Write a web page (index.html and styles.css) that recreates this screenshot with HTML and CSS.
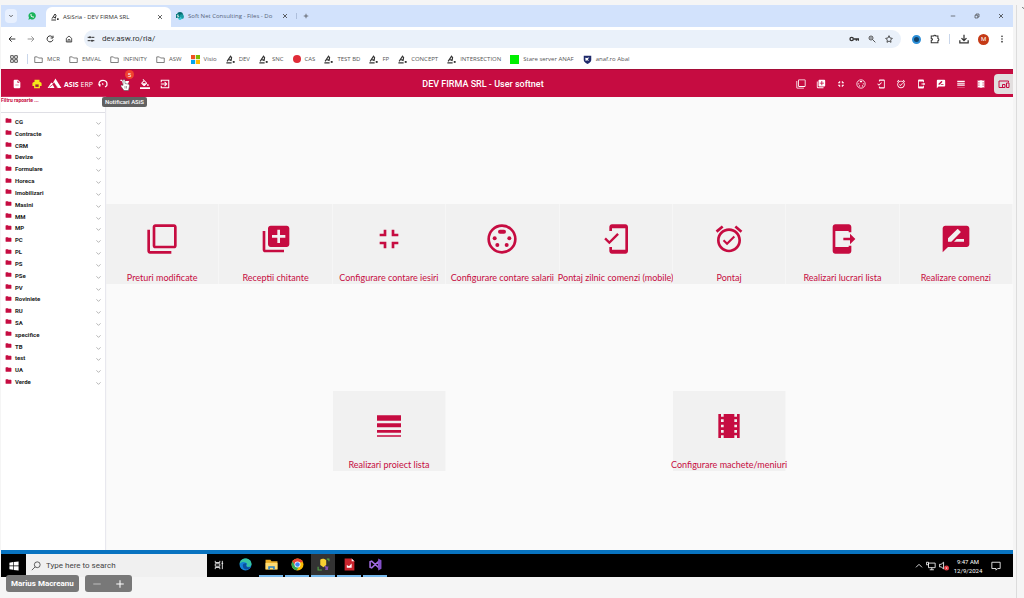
FILE: index.html
```html
<!DOCTYPE html>
<html lang="ro">
<head>
<meta charset="utf-8">
<title>ASiSria - DEV FIRMA SRL</title>
<link rel="stylesheet" href="styles.css">
</head>
<body>
<svg class="defs" aria-hidden="true">
<symbol id="copies" viewBox="0 0 24 24"><path d="M3 5H1v16c0 1.100.9 2 2 2h16v-2H3V5zm18-4H7c-1.100 0-2 .9-2 2v14c0 1.100.9 2 2 2h14c1.100 0 2-.9 2-2V3c0-1.100-.9-2-2-2zm0 16H7V3h14v14z"/></symbol>
<symbol id="add" viewBox="0 0 24 24"><path d="M4 6H2v14c0 1.100.9 2 2 2h14v-2H4V6zm16-4H8c-1.100 0-2 .9-2 2v12c0 1.100.9 2 2 2h12c1.100 0 2-.9 2-2V4c0-1.100-.9-2-2-2zm-1 9h-4v4h-2v-4H9V9h4V5h2v4h4v2z"/></symbol>
<symbol id="shrink" viewBox="0 0 24 24"><path d="M5 16h3v3h2v-5H5v2zm3-8H5v2h5V5H8v3zm6 11h2v-3h3v-2h-5v5zm2-11V5h-2v5h5V8h-3z"/></symbol>
<symbol id="socket" viewBox="0 0 24 24"><circle cx="12" cy="12" r="10" fill="none" stroke="currentColor" stroke-width="2"/><rect x="9" y="5" width="6" height="3" rx="1.500"/><circle cx="6.500" cy="11.500" r="1.500"/><circle cx="17.500" cy="11.500" r="1.500"/><circle cx="8.500" cy="16.500" r="1.500"/><circle cx="15.500" cy="16.500" r="1.500"/></symbol>
<symbol id="mobile" viewBox="0 0 24 24"><path d="M19 1H9c-1.100 0-2 .9-2 2v3h2V4h10v16H9v-2H7v3c0 1.100.9 2 2 2h10c1.100 0 2-.9 2-2V3c0-1.100-.9-2-2-2zM7 13.470l-2.550-2.550-1.270 1.270L7 16l7.190-7.190-1.270-1.270z"/></symbol>
<symbol id="alarm" viewBox="0 0 24 24"><path d="M22 5.720l-4.600-3.860-1.290 1.530 4.600 3.860L22 5.720zM7.880 3.390L6.600 1.860 2 5.710l1.290 1.530 4.590-3.850zM12 4c-4.970 0-9 4.030-9 9s4.020 9 9 9c4.970 0 9-4.030 9-9s-4.030-9-9-9zm0 16c-3.870 0-7-3.130-7-7s3.130-7 7-7 7 3.130 7 7-3.130 7-7 7zm-1.460-5.470L8.410 12.400l-1.060 1.060 3.180 3.180 6-6-1.060-1.060-4.930 4.950z"/></symbol>
<symbol id="send" viewBox="0 0 24 24"><path d="M17 17h2v4c0 1.100-.9 2-2 2H7c-1.100 0-2-.9-2-2V3c0-1.100.9-2 2-2h10c1.100 0 2 .9 2 2v4h-2V6H7v12h10v-1zM22 12l-4-4v3h-5v2h5v3l4-4z"/></symbol>
<symbol id="review" viewBox="0 0 24 24"><path d="M20 2H4c-1.100 0-2 .9-2 2v18l4-4h14c1.100 0 2-.9 2-2V4c0-1.100-.9-2-2-2zM6 14v-2.470l6.880-6.880c.2-.2.510-.2.710 0l1.770 1.770c.2.2.2.510 0 .710L8.470 14H6zm12 0h-7.500l2-2H18v2z"/></symbol>
<symbol id="lines" viewBox="0 0 24 24"><path d="M3 17h18v-2H3v2zm0 3h18v-1H3v1zm0-7h18v-3H3v3zm0-9v4h18V4H3z"/></symbol>
<symbol id="film" viewBox="0 0 24 24"><path d="M18 3v2h-2V3H8v2H6V3H4v18h2v-2h2v2h8v-2h2v2h2V3h-2zM8 17H6v-2h2v2zm0-4H6v-2h2v2zm0-4H6V7h2v2zm10 8h-2v-2h2v2zm0-4h-2v-2h2v2zm0-4h-2V7h2v2z"/></symbol>
<symbol id="devices" viewBox="0 0 24 24"><path d="M2 19V6h19v3M2 19h10M14 19v-6h-5v6zM17 10h5v9h-5z" fill="none" stroke="currentColor" stroke-width="2"/></symbol>
<symbol id="doc" viewBox="0 0 24 24"><path d="M14 2H6c-1.100 0-2 .9-2 2v16c0 1.100.9 2 2 2h12c1.100 0 2-.9 2-2V8zM13 9V3.500L18.500 9zM8 13h8v1H8zm0 3h8v1H8z"/></symbol>
<symbol id="printer" viewBox="0 0 24 24"><path d="M6 2h12v5H6zM5 7h14c2.500 0 4 2 4 4v6h-4v5H5v-5H1v-6c0-2 1.500-4 4-4z"/><path d="M8 13h8v6H8z" fill="#a3243d"/></symbol>
<symbol id="mountain" viewBox="0 0 30 24"><path d="M0 22L8 10l3 2 6-11 13 21h-9l-7-13-3 5 4 8z"/><path d="M4 20l10-8 8 9" fill="none" stroke="#c60c41" stroke-width="1.500"/></symbol>
<symbol id="headset" viewBox="0 0 24 24"><path d="M3 15C1 7 6 3 12 3c7 0 11 5 9 13l-4 3" fill="none" stroke="currentColor" stroke-width="3"/><path d="M1 12h5v6H3zM9 9l5 3-3 3z"/></symbol>
<symbol id="bucket" viewBox="0 0 24 24"><path d="M16.600 9L7.600 0 6.200 1.400l2.400 2.400-5.200 5.200c-.6.600-.6 1.500 0 2.100l5.500 5.500c.6.600 1.600.6 2.200 0l5.500-5.500c.5-.6.5-1.500-.1-2.100zM5.200 10L10 5.200 14.800 10zM19 11.500s-2 2.200-2 3.500a2 2 0 004 0c0-1.300-2-3.500-2-3.500zM0 20h24v4H0z"/></symbol>
<symbol id="exit" viewBox="0 0 24 24"><path d="M3 8V3h18v18H3v-5M2 12h13M11 7l5 5-5 5" fill="none" stroke="currentColor" stroke-width="2.500"/></symbol>
<symbol id="cart" viewBox="0 0 24 24"><path d="M1 2h4l2 3h15l-4 10H8L4 5H1zM8 17h11v2H8z"/><circle cx="9" cy="21" r="2"/><circle cx="18" cy="21" r="2"/></symbol>
<symbol id="hand" viewBox="0 0 20 24"><path d="M6 13V3c0-3 4-3 4 0v6l6 1c2 0 3 2 3 4l-2 9H8L2 15c-1-2 1-4 4-2z" fill="#fff" stroke="#444" stroke-width="1"/><path d="M10 14v5m3-5v5" stroke="#444"/></symbol>
<symbol id="folder" viewBox="0 0 24 24"><path d="M10 4H4c-1.100 0-2 .9-2 2v12c0 1.100.9 2 2 2h16c1.100 0 2-.9 2-2V8c0-1.100-.9-2-2-2h-8z"/></symbol>
<symbol id="folder-line" viewBox="0 0 24 24"><path d="M2 5h7l3 3h10v12H2z" fill="none" stroke="currentColor" stroke-width="2"/></symbol>
<symbol id="asis" viewBox="0 0 24 24"><path d="M3 17L12 3l3 4-2 9M7 12l8 3M1 21h14" fill="none" stroke="#333" stroke-width="3"/><path d="M18 16h5v5h-5z" fill="#333"/></symbol>
<symbol id="down" viewBox="0 0 24 24"><path d="M5 8l7 7 7-7" fill="none" stroke="currentColor" stroke-width="3"/></symbol>
<symbol id="cross" viewBox="0 0 24 24"><path d="M4 4l16 16M20 4L4 20" fill="none" stroke="currentColor" stroke-width="3"/></symbol>
<symbol id="plus" viewBox="0 0 24 24"><path d="M12 3v18M3 12h18" fill="none" stroke="currentColor" stroke-width="2.500"/></symbol>
<symbol id="minus" viewBox="0 0 24 24"><path d="M3 12h18" fill="none" stroke="currentColor" stroke-width="2.500"/></symbol>
<symbol id="restore" viewBox="0 0 24 24"><path d="M4 9h11v11H4zM8 8V4h12v12h-4" fill="none" stroke="currentColor" stroke-width="2.500"/></symbol>
<symbol id="arrow" viewBox="0 0 24 24"><path d="M22 12H3M11 4l-8 8 8 8" fill="none" stroke="currentColor" stroke-width="3"/></symbol>
<symbol id="reload" viewBox="0 0 24 24"><path d="M20 7a9 9 0 101 7M21 2v7h-7" fill="none" stroke="currentColor" stroke-width="3"/></symbol>
<symbol id="home" viewBox="0 0 24 24"><path d="M4 10l8-7 8 7v11H4zM9 21v-7h6v7" fill="none" stroke="currentColor" stroke-width="2.500"/></symbol>
<symbol id="tune" viewBox="0 0 24 24"><path d="M2 7h5M13 7h9M2 17h9M17 17h5" stroke="currentColor" stroke-width="3"/><circle cx="9" cy="7" r="3"/><circle cx="15" cy="17" r="3"/></symbol>
<symbol id="key" viewBox="0 0 30 24"><path d="M14 12h14v5M22 12v5" fill="none" stroke="currentColor" stroke-width="4"/><circle cx="8" cy="12" r="5" fill="none" stroke="currentColor" stroke-width="4"/></symbol>
<symbol id="lens" viewBox="0 0 24 24"><circle cx="9" cy="9" r="6" fill="none" stroke="currentColor" stroke-width="2.500"/><path d="M14 14l8 8M6 9h6" stroke="currentColor" stroke-width="2.500"/></symbol>
<symbol id="search" viewBox="0 0 24 24"><circle cx="15" cy="9" r="7" fill="none" stroke="currentColor" stroke-width="2"/><path d="M10 14l-8 8" stroke="currentColor" stroke-width="2"/></symbol>
<symbol id="star" viewBox="0 0 24 24"><path d="M12 2l3 7 7 1-5 5 1 7-6-4-6 4 1-7-5-5 7-1z" fill="none" stroke="currentColor" stroke-width="2.500"/></symbol>
<symbol id="puzzle" viewBox="0 0 24 24"><path d="M3 5h6c0-3 5-3 5 0h5v6c3 0 3 5 0 5v5H3v-6c4 0 4-4 0-4z" fill="none" stroke="currentColor" stroke-width="2.500"/></symbol>
<symbol id="download" viewBox="0 0 24 24"><path d="M12 2v13M6 10l6 6 6-6M2 15v6h20v-6" fill="none" stroke="currentColor" stroke-width="3"/></symbol>
<symbol id="dots" viewBox="0 0 24 24"><circle cx="12" cy="4" r="2.500"/><circle cx="12" cy="12" r="2.500"/><circle cx="12" cy="20" r="2.500"/></symbol>
<symbol id="apps" viewBox="0 0 24 24"><path d="M2 2h8v8H2zM14 2h8v8h-8zM2 14h8v8H2zM14 14h8v8h-8z" fill="none" stroke="currentColor" stroke-width="3"/></symbol>
<symbol id="ms" viewBox="0 0 24 24"><path d="M0 0h11v11H0z" fill="#f25022"/><path d="M13 0h11v11H13z" fill="#7fba00"/><path d="M0 13h11v11H0z" fill="#00a4ef"/><path d="M13 13h11v11H13z" fill="#ffb900"/></symbol>
<symbol id="shield" viewBox="0 0 24 24"><path d="M2 2h20v11c0 5-5 8-10 11C7 21 2 18 2 13z" fill="#1f2a6b"/><path d="M6 7l5 1 6-2-4 5 3 5-5-2-4 2z" fill="#fff"/></symbol>
<symbol id="whatsapp" viewBox="0 0 24 24"><path d="M1 23l2-6a11 11 0 114 4z" fill="#19b35b"/><path d="M7 7c0 6 4 10 10 10l1-3-4-1-1 1-3-4 1-1-1-3z" fill="#fff"/></symbol>
<symbol id="sharepoint" viewBox="0 0 24 24"><circle cx="12" cy="9" r="9" fill="#036c70"/><circle cx="17" cy="14" r="7" fill="#1a9ba1"/><circle cx="12" cy="19" r="5" fill="#37c6d0"/><path d="M0 6h11v12H0z" fill="#03787c"/><path d="M8 9H4v3h4v3H3" fill="none" stroke="#fff" stroke-width="2"/></symbol>
<symbol id="windows" viewBox="0 0 24 24"><path d="M1 4l9-1.500V11H1zM11.500 2.200L23 1v10H11.500zM1 12.500h9V21L1 20zM11.500 12.500H23V23l-11.500-1.500z"/></symbol>
<symbol id="taskview" viewBox="0 0 24 24"><path d="M3 2v4h11V2M3 22v-4h11v4M3 9h11v6H3zM20 2v20M18 8h4" fill="none" stroke="currentColor" stroke-width="2"/></symbol>
<symbol id="edge" viewBox="0 0 24 24"><circle cx="12" cy="12" r="11" fill="#1483d6"/><path d="M1 11C2 4 7 1 12 1c7 0 11 5 11 10 0 4-3 6-7 5-3 0-2-2-1-4 0-4-9-7-14-1z" fill="#36c6a1"/><path d="M7 14c0-4 4-5 7-4-2 3-1 7 4 7 2 0 3-1 4-1-3 6-15 8-15-2z" fill="#0b4f9e"/></symbol>
<symbol id="explorer" viewBox="0 0 24 24"><path d="M1 3h9l2 3h11v15H1z" fill="#e9ac26"/><path d="M1 9h22v12H1z" fill="#ffdc73"/><path d="M6 21v-6h12v6h-3v-3H9v3z" fill="#2d84c7"/></symbol>
<symbol id="chrome" viewBox="0 0 24 24"><circle cx="12" cy="12" r="11" fill="#fbbc04"/><path d="M2.500 6.500a11 11 0 0119 0L22 8H12l-5 6z" fill="#ea4335"/><path d="M2.500 6.500a11 11 0 008 16.300L15 15l-7-1z" fill="#34a853"/><circle cx="12" cy="12" r="5.500" fill="#fff"/><circle cx="12" cy="12" r="4.200" fill="#4285f4"/></symbol>
<symbol id="tools" viewBox="0 0 24 24"><path d="M6 3c3-3 9-2 11 1v9l-5 4-6-4z" fill="#f8cf32"/><path d="M2 16v6h7M22 6V2h-4" fill="none" stroke="#55a646" stroke-width="2"/><path d="M13 16l3-2 2 2 3-1-1 7h-5l1-4z" fill="#8450b5"/></symbol>
<symbol id="report" viewBox="0 0 24 24"><path d="M3 1h13l5 5v17H3z" fill="#c9242d"/><path d="M7 18v-5l4 2 5-5v8z" fill="#fff"/><path d="M16 1v5h5z" fill="#fff"/></symbol>
<symbol id="studio" viewBox="0 0 24 24"><path d="M2 7l3-1 13 12V6L5 18l-3-1z" fill="none" stroke="#a06be0" stroke-width="3"/><path d="M17 1l6 3v16l-6 3z" fill="#8450c8"/></symbol>
<symbol id="up" viewBox="0 0 24 24"><path d="M3 16l9-9 9 9" fill="none" stroke="currentColor" stroke-width="2.500"/></symbol>
<symbol id="network" viewBox="0 0 24 24"><path d="M6 5h16v11H6zM9 21h10M14 16v5M1 3h5v6H1z" fill="none" stroke="currentColor" stroke-width="2"/></symbol>
<symbol id="sound" viewBox="0 0 24 24"><path d="M1 8h4l6-5v16l-6-5H1z" fill="none" stroke="currentColor" stroke-width="2"/><circle cx="18" cy="17" r="6" fill="#e2353c"/><path d="M16 15l4 4m0-4l-4 4" stroke="#fff" stroke-width="1.500"/></symbol>
<symbol id="chat" viewBox="0 0 24 24"><path d="M2 3h20v15h-6l-4 4v-4H2z" fill="none" stroke="currentColor" stroke-width="2"/></symbol>
</svg>

<div class="desktop">
<div class="screen">
  <div class="tabs">
    <button class="tab-menu" aria-label="Tabs"><svg class="i6"><use href="#down"/></svg></button>
    <svg class="i8 pinned"><use href="#whatsapp"/></svg>
    <div class="tab active"><svg class="i8"><use href="#asis"/></svg><span class="tab-title">ASiSria - DEV FIRMA SRL</span><button aria-label="Close"><svg class="i6"><use href="#cross"/></svg></button></div>
    <div class="tab"><svg class="i8"><use href="#sharepoint"/></svg><span class="tab-title faded">Soft Net Consulting - Files - Do</span><button aria-label="Close"><svg class="i6"><use href="#cross"/></svg></button></div>
    <button class="new-tab" aria-label="New tab"><svg class="i6"><use href="#plus"/></svg></button>
    <div class="window-buttons">
      <button aria-label="Minimize"><svg class="i6"><use href="#minus"/></svg></button>
      <button aria-label="Restore"><svg class="i6"><use href="#restore"/></svg></button>
      <button aria-label="Close window"><svg class="i6"><use href="#cross"/></svg></button>
    </div>
  </div>

  <div class="toolbar">
    <button aria-label="Back"><svg class="i8"><use href="#arrow"/></svg></button>
    <button class="forward" aria-label="Forward"><svg class="i8"><use href="#arrow"/></svg></button>
    <button aria-label="Reload"><svg class="i8"><use href="#reload"/></svg></button>
    <button aria-label="Home"><svg class="i8"><use href="#home"/></svg></button>
    <div class="address">
      <svg class="i8"><use href="#tune"/></svg>
      <input type="text" aria-label="Address" value="dev.asw.ro/ria/">
      <svg class="key"><use href="#key"/></svg>
      <svg class="i8"><use href="#lens"/></svg>
      <svg class="i8"><use href="#star"/></svg>
    </div>
    <div class="extensions">
      <span class="extension"></span>
      <button aria-label="Extensions"><svg class="i10"><use href="#puzzle"/></svg></button>
      <span class="divider"></span>
      <button aria-label="Downloads"><svg class="i10"><use href="#download"/></svg></button>
      <button class="avatar">M</button>
      <button aria-label="Menu"><svg class="i8"><use href="#dots"/></svg></button>
    </div>
  </div>

  <nav class="bookmarks">
    <button aria-label="Apps"><svg class="i8"><use href="#apps"/></svg></button>
    <span class="divider"></span>
    <a href="#"><svg><use href="#folder-line"/></svg>MCR</a>
    <a href="#"><svg><use href="#folder-line"/></svg>EMVAL</a>
    <a href="#"><svg><use href="#folder-line"/></svg>INFINITY</a>
    <a href="#"><svg><use href="#folder-line"/></svg>ASW</a>
    <a href="#"><svg><use href="#ms"/></svg>Visio</a>
    <a href="#"><svg><use href="#asis"/></svg>DEV</a>
    <a href="#"><svg><use href="#asis"/></svg>SNC</a>
    <a href="#"><span class="dot"></span>CAS</a>
    <a href="#"><svg><use href="#asis"/></svg>TEST BD</a>
    <a href="#"><svg><use href="#asis"/></svg>FP</a>
    <a href="#"><svg><use href="#asis"/></svg>CONCEPT</a>
    <a href="#"><svg><use href="#asis"/></svg>INTERSECTION</a>
    <a href="#"><span class="green"></span>Stare server ANAF</a>
    <a href="#"><svg><use href="#shield"/></svg>anaf.ro Abal</a>
  </nav>

  <header class="app-bar">
    <div class="group">
      <button aria-label="Document"><svg class="i10"><use href="#doc"/></svg></button>
      <button class="print" aria-label="Print"><svg class="i10"><use href="#printer"/></svg></button>
      <div class="logo"><svg><use href="#mountain"/></svg><span><b>ASiS</b> ERP</span></div>
      <button aria-label="Support"><svg class="i10"><use href="#headset"/></svg></button>
      <button class="notify" aria-label="Notificari ASiS"><svg class="i10"><use href="#cart"/></svg><span class="badge">5</span><svg class="hand"><use href="#hand"/></svg><span class="tooltip">Notificari ASiS</span></button>
      <button aria-label="Theme"><svg class="i10"><use href="#bucket"/></svg></button>
      <button aria-label="Logout"><svg class="i10"><use href="#exit"/></svg></button>
    </div>
    <h1>DEV FIRMA SRL - User softnet</h1>
    <div class="shortcuts">
      <button aria-label="Preturi modificate"><svg class="i10"><use href="#copies"/></svg></button>
      <button aria-label="Receptii chitante"><svg class="i10"><use href="#add"/></svg></button>
      <button aria-label="Configurare contare iesiri"><svg class="i10"><use href="#shrink"/></svg></button>
      <button aria-label="Configurare contare salarii"><svg class="i10"><use href="#socket"/></svg></button>
      <button aria-label="Pontaj zilnic comenzi"><svg class="i10"><use href="#mobile"/></svg></button>
      <button aria-label="Pontaj"><svg class="i10"><use href="#alarm"/></svg></button>
      <button aria-label="Realizari lucrari lista"><svg class="i10"><use href="#send"/></svg></button>
      <button aria-label="Realizare comenzi"><svg class="i10"><use href="#review"/></svg></button>
      <button aria-label="Realizari proiect lista"><svg class="i10"><use href="#lines"/></svg></button>
      <button aria-label="Configurare machete/meniuri"><svg class="i10"><use href="#film"/></svg></button>
      <button class="selected" aria-label="Panou"><svg><use href="#devices"/></svg></button>
    </div>
  </header>

  <div class="workspace">
    <aside class="sidebar">
      <input class="filter" type="text" aria-label="Filtru rapoarte" placeholder="Filtru rapoarte ...">
      <ul class="menu">
        <li><button><svg class="f"><use href="#folder"/></svg><span>CG</span><svg class="c"><use href="#down"/></svg></button></li>
        <li><button><svg class="f"><use href="#folder"/></svg><span>Contracte</span><svg class="c"><use href="#down"/></svg></button></li>
        <li><button><svg class="f"><use href="#folder"/></svg><span>CRM</span><svg class="c"><use href="#down"/></svg></button></li>
        <li><button><svg class="f"><use href="#folder"/></svg><span>Devize</span><svg class="c"><use href="#down"/></svg></button></li>
        <li><button><svg class="f"><use href="#folder"/></svg><span>Formulare</span><svg class="c"><use href="#down"/></svg></button></li>
        <li><button><svg class="f"><use href="#folder"/></svg><span>Horeca</span><svg class="c"><use href="#down"/></svg></button></li>
        <li><button><svg class="f"><use href="#folder"/></svg><span>Imobilizari</span><svg class="c"><use href="#down"/></svg></button></li>
        <li><button><svg class="f"><use href="#folder"/></svg><span>Masini</span><svg class="c"><use href="#down"/></svg></button></li>
        <li><button><svg class="f"><use href="#folder"/></svg><span>MM</span><svg class="c"><use href="#down"/></svg></button></li>
        <li><button><svg class="f"><use href="#folder"/></svg><span>MP</span><svg class="c"><use href="#down"/></svg></button></li>
        <li><button><svg class="f"><use href="#folder"/></svg><span>PC</span><svg class="c"><use href="#down"/></svg></button></li>
        <li><button><svg class="f"><use href="#folder"/></svg><span>PL</span><svg class="c"><use href="#down"/></svg></button></li>
        <li><button><svg class="f"><use href="#folder"/></svg><span>PS</span><svg class="c"><use href="#down"/></svg></button></li>
        <li><button><svg class="f"><use href="#folder"/></svg><span>PSe</span><svg class="c"><use href="#down"/></svg></button></li>
        <li><button><svg class="f"><use href="#folder"/></svg><span>PV</span><svg class="c"><use href="#down"/></svg></button></li>
        <li><button><svg class="f"><use href="#folder"/></svg><span>Roviniete</span><svg class="c"><use href="#down"/></svg></button></li>
        <li><button><svg class="f"><use href="#folder"/></svg><span>RU</span><svg class="c"><use href="#down"/></svg></button></li>
        <li><button><svg class="f"><use href="#folder"/></svg><span>SA</span><svg class="c"><use href="#down"/></svg></button></li>
        <li><button><svg class="f"><use href="#folder"/></svg><span>specifice</span><svg class="c"><use href="#down"/></svg></button></li>
        <li><button><svg class="f"><use href="#folder"/></svg><span>TB</span><svg class="c"><use href="#down"/></svg></button></li>
        <li><button><svg class="f"><use href="#folder"/></svg><span>test</span><svg class="c"><use href="#down"/></svg></button></li>
        <li><button><svg class="f"><use href="#folder"/></svg><span>UA</span><svg class="c"><use href="#down"/></svg></button></li>
        <li><button><svg class="f"><use href="#folder"/></svg><span>Verde</span><svg class="c"><use href="#down"/></svg></button></li>
      </ul>
    </aside>
    <main class="tiles">
      <button class="tile"><svg><use href="#copies"/></svg><span>Preturi modificate</span></button>
      <button class="tile"><svg><use href="#add"/></svg><span>Receptii chitante</span></button>
      <button class="tile"><svg><use href="#shrink"/></svg><span>Configurare contare iesiri</span></button>
      <button class="tile"><svg><use href="#socket"/></svg><span>Configurare contare salarii</span></button>
      <button class="tile"><svg><use href="#mobile"/></svg><span>Pontaj zilnic comenzi (mobile)</span></button>
      <button class="tile"><svg><use href="#alarm"/></svg><span>Pontaj</span></button>
      <button class="tile"><svg><use href="#send"/></svg><span>Realizari lucrari lista</span></button>
      <button class="tile"><svg><use href="#review"/></svg><span>Realizare comenzi</span></button>
      <button class="tile"><svg><use href="#lines"/></svg><span>Realizari proiect lista</span></button>
      <button class="tile"><svg><use href="#film"/></svg><span>Configurare machete/meniuri</span></button>
    </main>
  </div>

  <footer class="taskbar">
    <button class="start" aria-label="Start"><svg class="i10"><use href="#windows"/></svg></button>
    <label class="search"><svg class="i10"><use href="#search"/></svg><input type="text" aria-label="Search" placeholder="Type here to search"></label>
    <div class="apps">
      <button aria-label="Task view"><svg class="i10"><use href="#taskview"/></svg></button>
      <button aria-label="Edge"><svg><use href="#edge"/></svg></button>
      <button class="open" aria-label="Explorer"><svg><use href="#explorer"/></svg></button>
      <button class="open" aria-label="Chrome"><svg><use href="#chrome"/></svg></button>
      <button class="open current" aria-label="Management Studio"><svg><use href="#tools"/></svg></button>
      <button class="open" aria-label="Report Builder"><svg><use href="#report"/></svg></button>
      <button class="open" aria-label="Visual Studio"><svg><use href="#studio"/></svg></button>
    </div>
    <div class="tray">
      <svg class="i8"><use href="#up"/></svg>
      <svg class="i10"><use href="#network"/></svg>
      <svg class="i10"><use href="#sound"/></svg>
      <div class="clock"><span>9:47 AM</span><span>12/9/2024</span></div>
      <svg class="i10"><use href="#chat"/></svg>
    </div>
  </footer>
  <div class="call">
    <span class="speaker">Marius Macreanu</span>
    <div class="zoom"><button aria-label="Zoom out"><svg class="i10"><use href="#minus"/></svg></button><button aria-label="Zoom in"><svg class="i10"><use href="#plus"/></svg></button></div>
  </div>
</div>
<div class="gutter"><svg class="i6"><use href="#down"/></svg></div>
</div>
</body>
</html>
```
FILE: styles.css
```css
* { box-sizing: border-box; }
body { margin: 0; background: #f5f5f5; color: #333; font-family: Roboto, "Noto Sans", sans-serif; font-size: 6px; line-height: 10px; }
svg { display: block; flex: none; fill: currentColor; }
button { display: flex; align-items: center; justify-content: center; flex: none; padding: 0; border: 0; background: none; color: inherit; font: inherit; }
input { min-width: 0; padding: 0; border: 0; outline: 0; background: none; color: inherit; font: inherit; }
a { color: inherit; text-decoration: none; }
.defs { position: absolute; width: 0; height: 0; }
.i6 { width: 6px; height: 6px; }
.i8 { width: 8px; height: 8px; }
.i10 { width: 10px; height: 10px; }
.divider { width: 1px; height: 10px; background: #c9d6ea; }

.desktop { display: flex; min-height: 100vh; padding: 5px 0 0 1px; overflow: hidden; }
.screen { display: flex; flex: 1; flex-direction: column; min-width: 0; }
.gutter { width: 8px; margin-left: 3px; border-left: 1px solid #dcdcdc; color: #333; }
.gutter svg { margin-left: 4px; }

.tabs { display: flex; align-items: center; height: 22px; padding-left: 4px; background: #d2e2fc; font-family: "Open Sans", sans-serif; }
.tab-menu { width: 12px; height: 14px; border-radius: 4px; background: #e8f0fe; }
.pinned { margin: 0 10px 0 11px; }
.tab { display: flex; align-items: center; gap: 4px; width: 125px; height: 20px; padding: 0 8px 0 5px; }
.tab.active { align-self: flex-end; border-radius: 6px 6px 0 0; background: #fff; }
.tab-title { flex: 1; white-space: nowrap; }
.faded { color: #56637a; }
.new-tab { padding-left: 6px; border-left: 1px solid #aebfdc; }
.window-buttons { display: flex; gap: 18px; margin-left: auto; padding-right: 9px; }

.toolbar { display: flex; align-items: center; gap: 11px; height: 24px; padding: 0 7px; background: #fff; }
.forward svg { transform: scaleX(-1); opacity: 0.5; }
.address { display: flex; flex: 1; align-items: center; gap: 9px; height: 18px; padding: 0 8px 0 3px; border-radius: 9px; background: #eaf1fa; }
.address input { flex: 1; margin-left: -2px; font-size: 8px; line-height: 12px; }
.key { width: 10px; height: 8px; }
.extensions { display: flex; align-items: center; gap: 9px; }
.extension { width: 9px; height: 9px; border: 2px solid #2c8fd8; border-radius: 50%; background: #134268; }
.avatar { width: 11px; height: 11px; border-radius: 50%; background: #c53a16; color: #fff; }

.bookmarks { display: flex; align-items: center; gap: 9px; height: 18px; padding: 0 0 2px 9px; background: #fff; white-space: nowrap; color: #555; font-family: "Open Sans", sans-serif; }
.bookmarks .divider { margin-right: -3px; }
.bookmarks a { display: flex; align-items: center; gap: 4px; }
.bookmarks a svg { width: 9px; height: 9px; }
.dot { width: 8px; height: 8px; border-radius: 50%; background: #e02b38; }
.green { width: 9px; height: 9px; background: #00ef00; }

.app-bar { display: flex; align-items: center; justify-content: space-between; height: 28px; padding-left: 11px; border-top: 1px solid #a50c38; background: #c60c41; color: #fff; }
.app-bar h1 { margin: 0; font-size: 9px; font-weight: 500; line-height: 12px; }
.group { display: flex; align-items: center; gap: 10px; }
.print { color: #f6e81c; }
.logo { display: flex; align-items: flex-end; gap: 2px; margin: 0 -5px; font: 7px/8px "Open Sans", sans-serif; }
.logo svg { width: 15px; height: 11px; }
.notify { position: relative; margin-left: 2px; }
.badge { position: absolute; top: -9px; right: -4px; width: 9px; height: 9px; border-radius: 50%; background: #f0442f; line-height: 9px; }
.hand { position: absolute; top: 0; left: 0; width: 10px; height: 12px; }
.tooltip { position: absolute; z-index: 1; top: 18px; left: -18px; padding: 0 3px; border-radius: 2px; background: #616161; font-weight: 500; white-space: nowrap; }
.shortcuts { display: flex; align-items: center; gap: 10px; }
.selected { width: 19px; height: 20px; margin-left: -2px; border-radius: 4px 0 0 4px; background: #e2dfdf; color: #c60c41; }
.selected svg { width: 12px; height: 12px; }

.workspace { display: flex; flex: 1; background: #fafafa; }
.sidebar { width: 104px; background: #fff; box-shadow: 1px 0 1px #e8e8ee; }
.filter { display: block; width: 100%; height: 16px; padding-bottom: 9px; border-bottom: 1px solid #dfdfe5; color: #c60c41; font-size: 5px; font-weight: 700; line-height: 7px; }
.filter::placeholder { color: #c60c41; opacity: 1; }
.menu { display: flex; flex-direction: column; height: 272px; margin: 3px 0 0; padding: 0; list-style: none; }
.menu li { display: flex; flex: 1; }
.menu button { flex: 1; gap: 3px; padding: 0 3px 0 4px; color: #222; font-weight: 700; }
.menu span { flex: 1; text-align: left; }
.menu .f { width: 7px; height: 7px; margin-bottom: 2px; color: #c60c41; }
.menu .c { width: 7px; height: 7px; margin-top: 3px; color: #aaa; }

.tiles { display: flex; flex: 1; flex-wrap: wrap; align-content: flex-start; justify-content: space-evenly; row-gap: 107px; padding: 107px 0 0 1px; }
.tile { flex-direction: column; justify-content: flex-end; gap: 17px; width: 12.5%; height: 80px; border-right: 1px solid #f6f6f6; background: #f1f1f1; color: #c60c41; font: 9px/12px Lato, sans-serif; white-space: nowrap; }
.tile svg { width: 32px; height: 32px; }

.taskbar { display: flex; height: 27px; border-top: 4px solid #0873c0; background: #000; color: #fff; }
.start { width: 25px; }
.search { display: flex; align-items: center; gap: 5px; width: 181px; padding-left: 5px; background: #f0f0f0; color: #444; }
.search input { flex: 1; font-size: 8px; line-height: 12px; }
.search input::placeholder { color: #444; opacity: 1; }
.apps { display: flex; gap: 2px; }
.apps button { width: 24px; border-bottom: 2px solid transparent; }
.apps .open { border-bottom-color: #76b9ed; }
.apps .current { background: #333; }
.apps svg { width: 13px; height: 13px; }
.apps .i10 { width: 10px; height: 10px; }
.tray { display: flex; align-items: center; gap: 3px; margin-left: auto; padding-right: 12px; }
.clock { display: flex; flex-direction: column; align-items: center; width: 32px; margin-right: 4px; line-height: 9px; }

.call { display: flex; gap: 6px; height: 21px; padding-left: 5px; color: #fff; }
.speaker, .zoom { z-index: 1; height: 17px; margin-top: -2px; border-radius: 3px; background: #787878; }
.speaker { padding: 0 5px; font-size: 8px; font-weight: 700; line-height: 17px; }
.zoom { display: flex; align-items: center; gap: 13px; padding: 0 7px; }
.zoom button:first-child { opacity: 0.5; }
```
